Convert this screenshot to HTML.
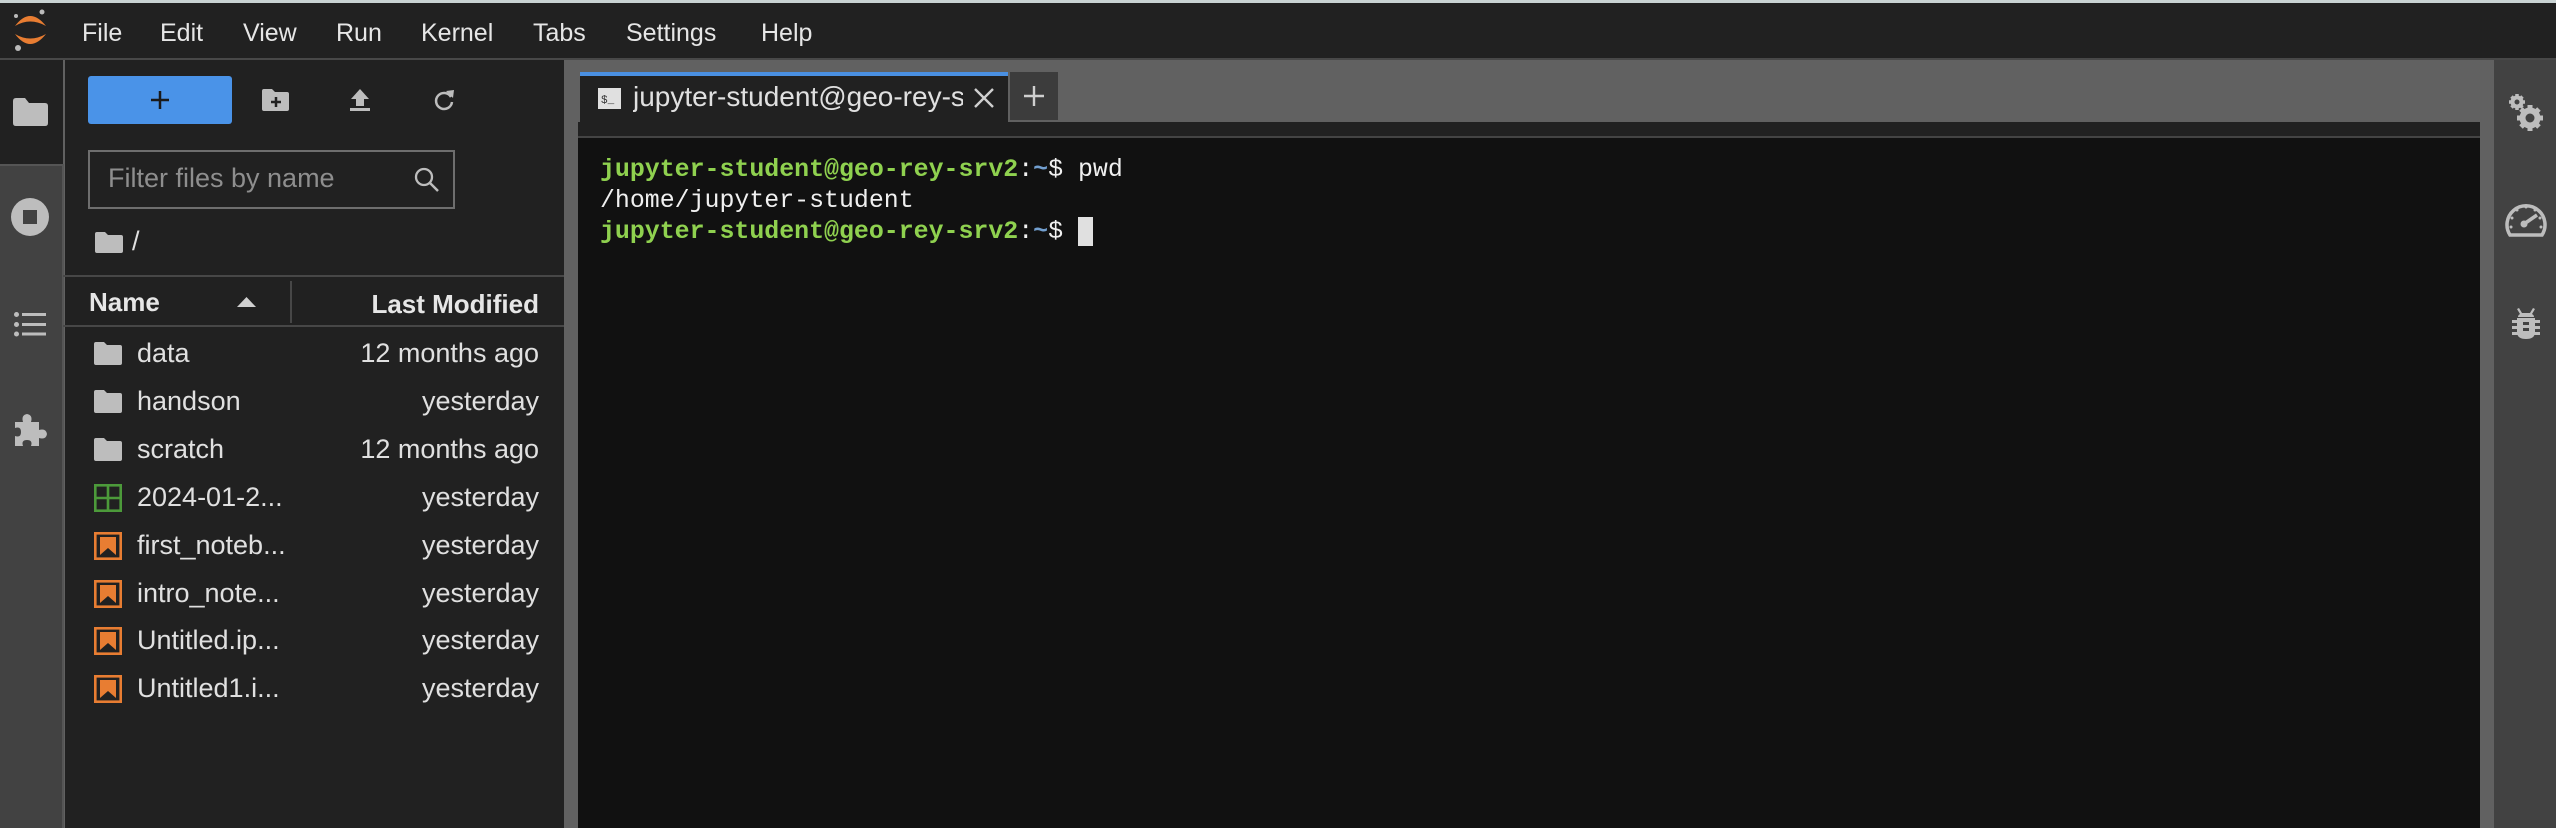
<!DOCTYPE html>
<html><head><meta charset="utf-8"><style>
*{margin:0;padding:0;box-sizing:border-box}
body{width:2556px;height:828px;background:#616161;position:relative;overflow:hidden;font-family:"Liberation Sans",sans-serif;color:#e0e0e0}
.a{position:absolute}
.menu{font-size:25px;color:#e6e6e6;top:19px}
.row{position:absolute;left:63px;width:501px;height:48px;font-size:27px}
.row .n{position:absolute;left:74px;top:8px;color:#e0e0e0}
.row .d{position:absolute;right:25px;top:8px;color:#e0e0e0}
.row svg{position:absolute;left:31px;top:12px}
.t{font-family:"Liberation Mono","DejaVu Sans Mono",monospace;font-size:24.9px;line-height:31px;white-space:pre;font-weight:bold}
.g{color:#8fd14f}.b{color:#729fcf}.w{color:#f0f0f0;font-weight:normal}
</style></head><body>
<div class="a" style="left:0;top:0;width:2556px;height:3px;background:#c9d3d3"></div>
<div class="a" style="left:0;top:3px;width:2556px;height:55px;background:#212121"></div>
<div class="a" style="left:0;top:58px;width:2556px;height:2px;background:#484848"></div>
<svg class="a" style="left:10px;top:6px" width="44" height="48" viewBox="10 6 44 48">
<path d="M15 26 Q30 6 46 26 Q30 17 15 26Z" fill="#e87d32"/>
<path d="M15 34 Q30 54 46 34 Q30 43 15 34Z" fill="#e87d32"/>
<circle cx="16" cy="16" r="2" fill="#bbb"/><circle cx="42" cy="12" r="2.5" fill="#bbb"/><circle cx="18" cy="48" r="3" fill="#bbb"/>
</svg>
<div class="a menu" style="left:82px">File</div>
<div class="a menu" style="left:160px">Edit</div>
<div class="a menu" style="left:243px">View</div>
<div class="a menu" style="left:336px">Run</div>
<div class="a menu" style="left:421px">Kernel</div>
<div class="a menu" style="left:533px">Tabs</div>
<div class="a menu" style="left:626px">Settings</div>
<div class="a menu" style="left:761px">Help</div>

<div class="a" style="left:0;top:60px;width:63px;height:105px;background:#212121"></div>
<div class="a" style="left:0;top:164px;width:64px;height:664px;background:#424242;border-top:2px solid #555;border-right:2px solid #555"></div>
<svg class="a" style="left:13px;top:98px" width="35" height="28" viewBox="0 0 35 28"><path d="M0 3Q0 0 3 0H12L16 5H32Q35 5 35 8V25Q35 28 32 28H3Q0 28 0 25Z" fill="#bdbdbd"/></svg>
<svg class="a" style="left:11px;top:198px" width="38" height="38" viewBox="0 0 38 38"><circle cx="19" cy="19" r="19" fill="#bdbdbd"/><rect x="12" y="12" width="14" height="14" fill="#424242"/></svg>
<svg class="a" style="left:14px;top:312px" width="32" height="25" viewBox="0 0 32 25"><g fill="#bdbdbd"><circle cx="2.5" cy="2.5" r="2.5"/><circle cx="2.5" cy="12.5" r="2.5"/><circle cx="2.5" cy="22" r="2.5"/><rect x="8" y="1" width="24" height="3"/><rect x="8" y="11" width="24" height="3"/><rect x="8" y="20.5" width="24" height="3"/></g></svg>
<svg class="a" style="left:13px;top:412px" width="36" height="36" viewBox="0 0 36 36"><path d="M2 10H10Q8 3 14 2Q20 3 18 10H26V18Q33 16 34 22Q33 28 26 26V34H18Q20 28 14 28Q8 28 10 34H2V24Q8 26 8 20Q8 14 2 16Z" fill="#bdbdbd"/></svg>

<div class="a" style="left:65px;top:60px;width:499px;height:768px;background:#212121"></div>
<div class="a" style="left:88px;top:76px;width:144px;height:48px;background:#4a93e8;border-radius:3px"></div>
<svg class="a" style="left:148px;top:88px" width="24" height="24" viewBox="0 0 24 24"><path d="M12 3V21M3 12H21" stroke="#1a1a1a" stroke-width="2.5"/></svg>
<svg class="a" style="left:262px;top:88px" width="28" height="24" viewBox="0 0 28 24"><path d="M0 3Q0 1 2 1H10L13 4H25Q27 4 27 6V21Q27 23 25 23H2Q0 23 0 21Z" fill="#bdbdbd"/><path d="M14 9V19M9 14H19" stroke="#212121" stroke-width="2.5"/></svg>
<svg class="a" style="left:349px;top:88px" width="22" height="24" viewBox="0 0 22 24"><path d="M11 1L20 11H15V18H7V11H2Z" fill="#bdbdbd"/><rect x="1" y="20" width="20" height="3" fill="#bdbdbd"/></svg>
<svg class="a" style="left:432px;top:88px" width="24" height="24" viewBox="0 0 24 24"><path d="M19 9A8 8 0 1 0 20 14" fill="none" stroke="#bdbdbd" stroke-width="2.5"/><path d="M14 3L22 2L21 10Z" fill="#bdbdbd"/></svg>
<div class="a" style="left:88px;top:150px;width:367px;height:59px;border:2px solid #6e6e6e"></div>
<div class="a" style="left:108px;top:163px;font-size:27px;color:#8e8e8e">Filter files by name</div>
<svg class="a" style="left:413px;top:166px" width="28" height="28" viewBox="0 0 28 28"><circle cx="11" cy="11" r="8" fill="none" stroke="#bdbdbd" stroke-width="2.3"/><path d="M17 17L25 25" stroke="#bdbdbd" stroke-width="2.5"/></svg>
<svg class="a" style="left:95px;top:232px" width="28" height="21" viewBox="0 0 28 21"><path d="M0 2Q0 0 2 0H10L13 3H26Q28 3 28 5V19Q28 21 26 21H2Q0 21 0 19Z" fill="#bdbdbd"/></svg>
<div class="a" style="left:132px;top:226px;font-size:27px;color:#e0e0e0">/</div>
<div class="a" style="left:63px;top:275px;width:501px;height:2px;background:#474747"></div>
<div class="a" style="left:89px;top:287px;font-size:26px;font-weight:bold;color:#e6e6e6">Name</div>
<svg class="a" style="left:237px;top:297px" width="19" height="10" viewBox="0 0 19 10"><path d="M0 10L9.5 0L19 10Z" fill="#d0d0d0"/></svg>
<div class="a" style="left:290px;top:281px;width:2px;height:42px;background:#474747"></div>
<div class="a" style="right:2017px;top:289px;font-size:26px;font-weight:bold;color:#e6e6e6">Last Modified</div>
<div class="a" style="left:63px;top:325px;width:501px;height:2px;background:#474747"></div>

<div class="row" style="top:330px"><svg width="28" height="23" viewBox="0 0 28 23"><path d="M0 2Q0 0 2 0H10L13 3H26Q28 3 28 5V21Q28 23 26 23H2Q0 23 0 21Z" fill="#bdbdbd"/></svg><span class="n">data</span><span class="d">12 months ago</span></div>
<div class="row" style="top:378px"><svg width="28" height="23" viewBox="0 0 28 23"><path d="M0 2Q0 0 2 0H10L13 3H26Q28 3 28 5V21Q28 23 26 23H2Q0 23 0 21Z" fill="#bdbdbd"/></svg><span class="n">handson</span><span class="d">yesterday</span></div>
<div class="row" style="top:426px"><svg width="28" height="23" viewBox="0 0 28 23"><path d="M0 2Q0 0 2 0H10L13 3H26Q28 3 28 5V21Q28 23 26 23H2Q0 23 0 21Z" fill="#bdbdbd"/></svg><span class="n">scratch</span><span class="d">12 months ago</span></div>
<div class="row" style="top:474px"><svg width="28" height="28" viewBox="0 0 28 28" style="top:10px"><g fill="none" stroke="#4c9a3a" stroke-width="2.6"><rect x="1.3" y="1.3" width="25.4" height="25.4"/><path d="M14 1V27M1 14H27"/></g></svg><span class="n">2024-01-2...</span><span class="d">yesterday</span></div>
<div class="row" style="top:522px"><svg width="28" height="28" viewBox="0 0 28 28" style="top:10px"><rect x="1.3" y="1.3" width="25.4" height="25.4" fill="none" stroke="#e87d32" stroke-width="2.6"/><path d="M6 5H22V23L14 16L6 23Z" fill="#e87d32"/></svg><span class="n">first_noteb...</span><span class="d">yesterday</span></div>
<div class="row" style="top:570px"><svg width="28" height="28" viewBox="0 0 28 28" style="top:10px"><rect x="1.3" y="1.3" width="25.4" height="25.4" fill="none" stroke="#e87d32" stroke-width="2.6"/><path d="M6 5H22V23L14 16L6 23Z" fill="#e87d32"/></svg><span class="n">intro_note...</span><span class="d">yesterday</span></div>
<div class="row" style="top:617px"><svg width="28" height="28" viewBox="0 0 28 28" style="top:10px"><rect x="1.3" y="1.3" width="25.4" height="25.4" fill="none" stroke="#e87d32" stroke-width="2.6"/><path d="M6 5H22V23L14 16L6 23Z" fill="#e87d32"/></svg><span class="n">Untitled.ip...</span><span class="d">yesterday</span></div>
<div class="row" style="top:665px"><svg width="28" height="28" viewBox="0 0 28 28" style="top:10px"><rect x="1.3" y="1.3" width="25.4" height="25.4" fill="none" stroke="#e87d32" stroke-width="2.6"/><path d="M6 5H22V23L14 16L6 23Z" fill="#e87d32"/></svg><span class="n">Untitled1.i...</span><span class="d">yesterday</span></div>

<div class="a" style="left:564px;top:60px;width:14px;height:768px;background:#616161"></div>
<div class="a" style="left:578px;top:122px;width:1902px;height:14px;background:#212121"></div>
<div class="a" style="left:580px;top:72px;width:428px;height:50px;background:#212121;border-top:4px solid #4a90e2"></div>
<svg class="a" style="left:598px;top:88px" width="23" height="21" viewBox="0 0 23 21"><rect width="23" height="21" fill="#e0e0e0"/><text x="3" y="15" font-family="Liberation Mono" font-size="11" fill="#333">$_</text></svg>
<div class="a" style="left:633px;top:81px;width:330px;overflow:hidden;white-space:nowrap;font-size:28px;color:#e0e0e0">jupyter-student@geo-rey-srv2</div>
<svg class="a" style="left:973px;top:87px" width="22" height="22" viewBox="0 0 22 22"><path d="M2 2L20 20M20 2L2 20" stroke="#cfcfcf" stroke-width="2.4"/></svg>
<div class="a" style="left:1010px;top:72px;width:48px;height:48px;background:#3c3c3c"></div>
<svg class="a" style="left:1023px;top:85px" width="22" height="22" viewBox="0 0 22 22"><path d="M11 1V21M1 11H21" stroke="#cfcfcf" stroke-width="2.4"/></svg>
<div class="a" style="left:578px;top:136px;width:1902px;height:2px;background:#444"></div>
<div class="a" style="left:578px;top:138px;width:1902px;height:690px;background:#111"></div>
<div class="a t" style="left:600px;top:155px"><span class="g">jupyter-student@geo-rey-srv2</span><span class="w">:</span><span class="b">~</span><span class="w">$ pwd</span>
<span class="w">/home/jupyter-student</span>
<span class="g">jupyter-student@geo-rey-srv2</span><span class="w">:</span><span class="b">~</span><span class="w">$ </span></div>
<div class="a" style="left:1078px;top:217px;width:15px;height:29px;background:#e0e0e0"></div>

<div class="a" style="left:2494px;top:60px;width:62px;height:768px;background:#424242"></div>
<svg class="a" style="left:2506px;top:92px" width="40" height="40" viewBox="2506 92 40 40">
<g fill="#bdbdbd"><circle cx="2517" cy="102" r="6.5"/><g stroke="#bdbdbd" stroke-width="3.5"><path d="M2517 94V110M2509 102H2525M2511.5 96.5L2522.5 107.5M2522.5 96.5L2511.5 107.5"/></g>
<circle cx="2530" cy="118" r="10.5"/><g stroke="#bdbdbd" stroke-width="5"><path d="M2530 105V131M2517 118H2543M2521 109L2539 127M2539 109L2521 127"/></g></g>
<circle cx="2517" cy="102" r="2.5" fill="#424242"/><circle cx="2530" cy="118" r="4.5" fill="#424242"/></svg>
<svg class="a" style="left:2505px;top:200px" width="42" height="37" viewBox="0 0 42 37"><path d="M5 35A19 19 0 1 1 37 35Z" fill="none" stroke="#bdbdbd" stroke-width="3.5"/><g fill="#bdbdbd"><circle cx="21" cy="7" r="1.5"/><circle cx="12" cy="10" r="1.5"/><circle cx="30" cy="10" r="1.5"/><circle cx="7" cy="18" r="1.5"/><circle cx="35" cy="18" r="1.5"/><circle cx="6" cy="27" r="1.5"/><circle cx="36" cy="27" r="1.5"/><circle cx="19" cy="24" r="3.5"/></g><path d="M19 24L32 15" stroke="#bdbdbd" stroke-width="3.5"/></svg>
<svg class="a" style="left:2512px;top:308px" width="28" height="31" viewBox="0 0 28 31"><g fill="#bdbdbd"><path d="M7 0L10 5H18L21 0L23 1L20 6Q22 7 22 9H6Q6 7 8 6L5 1Z"/><path d="M5 10H23V24Q23 31 14 31Q5 31 5 24Z"/><rect x="0" y="12" width="28" height="3"/><rect x="0" y="18" width="28" height="3"/><rect x="0" y="24" width="28" height="3"/></g><rect x="11" y="14" width="6" height="3" fill="#424242"/><rect x="11" y="20" width="6" height="3" fill="#424242"/></svg>
</body></html>
